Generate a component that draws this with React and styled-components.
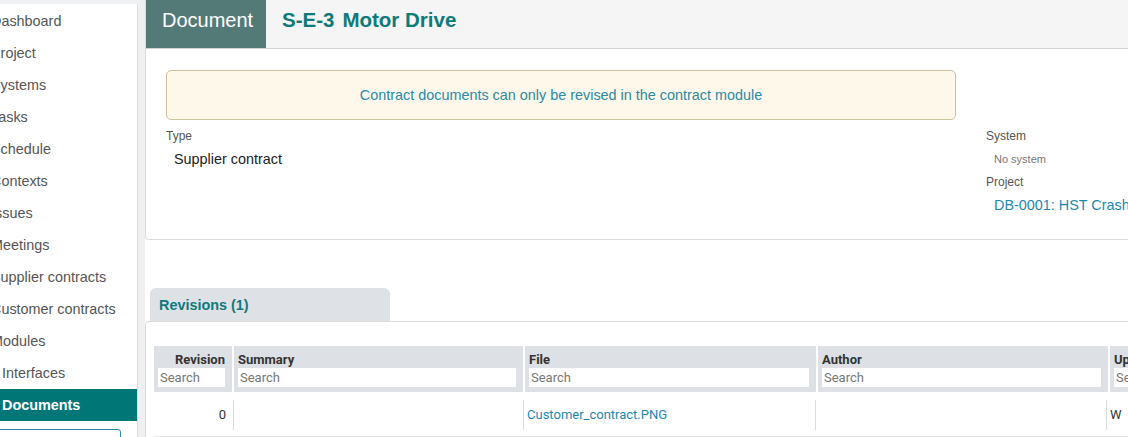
import React from "react";
import styled, { createGlobalStyle } from "styled-components";

const GlobalStyle = createGlobalStyle`
  html, body {
    margin: 0;
    padding: 0;
    overflow: hidden;
    background: #eef0f2;
    font-family: "Liberation Sans", Arial, sans-serif;
  }
`;

const navItems = [
  { label: "Dashboard" },
  { label: "Project" },
  { label: "Systems" },
  { label: "Tasks" },
  { label: "Schedule" },
  { label: "Contexts" },
  { label: "Issues" },
  { label: "Meetings" },
  { label: "Supplier contracts" },
  { label: "Customer contracts" },
  { label: "Modules" },
  { label: "Interfaces", sub: true },
  { label: "Documents", sub: true, active: true },
];

const columns = [
  { key: "revision", title: "Revision", width: 78, right: true },
  { key: "summary", title: "Summary", width: 289 },
  { key: "file", title: "File", width: 291 },
  { key: "author", title: "Author", width: 290 },
  { key: "uploaded", title: "Uploaded", width: 220 },
];

const revisions = [
  { revision: "0", summary: "", file: "Customer_contract.PNG", author: "", uploaded: "W" },
];

export default function App() {
  return (
    <>
      <GlobalStyle />
      <Layout>
        <Sidebar>
          <Nav>
            {navItems.map((item) => (
              <NavItem key={item.label} $sub={item.sub} $active={item.active}>
                {item.label}
              </NavItem>
            ))}
          </Nav>
          <SideSearch />
        </Sidebar>

        <Main>
          <Panel>
            <Header>
              <Kind>Document</Kind>
              <Title>
                <span>S-E-3</span>
                <span>Motor Drive</span>
              </Title>
            </Header>
            <PanelBody>
              <Alert>Contract documents can only be revised in the contract module</Alert>
              <div />
              <Field>
                <Label>Type</Label>
                <Value>Supplier contract</Value>
              </Field>
              <Field>
                <Label>System</Label>
                <Value $muted>No system</Value>
                <Label>Project</Label>
                <Value $link>DB-0001: HST Crash</Value>
              </Field>
            </PanelBody>
          </Panel>

          <Tabs>
            <Tab>Revisions (1)</Tab>
          </Tabs>
          <TabPanel>
            <Table>
              <HeadRow>
                {columns.map((col) => (
                  <HeadCell key={col.key} $w={col.width}>
                    <HeadTitle $right={col.right}>{col.title}</HeadTitle>
                    <SearchInput placeholder="Search" />
                  </HeadCell>
                ))}
              </HeadRow>
              {revisions.map((row) => (
                <BodyRow key={row.revision}>
                  {columns.map((col, i) => (
                    <BodyCell key={col.key} $w={col.width} $first={i === 0}>
                      <CellText $right={col.right} $link={col.key === "file"}>
                        {row[col.key]}
                      </CellText>
                    </BodyCell>
                  ))}
                </BodyRow>
              ))}
            </Table>
          </TabPanel>
        </Main>
      </Layout>
    </>
  );
}

const Layout = styled.div`
  display: flex;
  width: 100vw;
  height: 100vh;
  overflow: hidden;
`;

const Sidebar = styled.aside`
  flex: 0 0 137px;
  margin-top: 4px;
  padding-top: 1px;
  background: #fff;
  border-right: 1px solid #dcdcdc;
  overflow: hidden;
`;

const Nav = styled.nav`
  display: flex;
  flex-direction: column;
`;

const NavItem = styled.a`
  display: block;
  height: 32px;
  line-height: 32px;
  padding-left: ${(p) => (p.$sub ? "2px" : "0")};
  margin-left: ${(p) => (p.$sub ? "0" : "-9px")};
  font-size: 14.4px;
  white-space: nowrap;
  color: ${(p) => (p.$active ? "#fff" : "#555")};
  font-weight: ${(p) => (p.$active ? "bold" : "normal")};
  background: ${(p) => (p.$active ? "#007676" : "transparent")};
`;

const SideSearch = styled.div`
  margin-top: 8px;
  margin-left: -4px;
  width: 123px;
  height: 30px;
  border: 1px solid #2a8aa8;
  border-radius: 3px;
`;

const Main = styled.main`
  flex: 0 0 1100px;
  margin-left: 7px;
  background: #fff;
  display: flex;
  flex-direction: column;
`;

const Panel = styled.section`
  border: 1px solid #dcdcdc;
  border-top: none;
  border-radius: 0 0 4px 4px;
  background: #fff;
`;

const Header = styled.header`
  display: flex;
  align-items: flex-start;
  height: 48px;
  background: #f5f5f5;
  border-bottom: 1px solid #d2d2d2;
`;

const Kind = styled.div`
  width: 120px;
  height: 48px;
  box-sizing: border-box;
  padding: 8px 0 0 16px;
  background: #547a78;
  color: #fff;
  font-size: 20px;
  line-height: 24px;
`;

const Title = styled.h1`
  margin: 0;
  padding: 8px 0 0 16px;
  display: flex;
  gap: 8px;
  font-size: 20.5px;
  line-height: 24px;
  font-weight: bold;
  color: #0e7a7a;
`;

const PanelBody = styled.div`
  display: grid;
  grid-template-columns: 790px 1fr;
  column-gap: 30px;
  row-gap: 8px;
  padding: 21px 20px 19px 20px;
`;

const Alert = styled.div`
  height: 48px;
  line-height: 48px;
  border: 1px solid #c9c39b;
  border-radius: 5px;
  background: #fdf8e9;
  color: #2a8aa8;
  font-size: 14.4px;
  text-align: center;
`;

const Field = styled.div`
  display: flex;
  flex-direction: column;
`;

const Label = styled.div`
  font-size: 12px;
  line-height: 16px;
  color: #555;
`;

const Value = styled.div`
  padding-left: 8px;
  line-height: 30px;
  font-size: ${(p) => (p.$muted ? "11px" : "14.4px")};
  color: ${(p) => (p.$muted ? "#777" : p.$link ? "#1e88b0" : "#222")};
  white-space: nowrap;
`;

const Tabs = styled.div`
  display: flex;
  margin-top: 48px;
  padding-left: 5px;
`;

const Tab = styled.div`
  width: 240px;
  height: 33px;
  box-sizing: border-box;
  padding: 2px 0 0 9px;
  line-height: 31px;
  background: #dee1e5;
  border-radius: 6px 6px 0 0;
  color: #0e7a7a;
  font-size: 14.4px;
  font-weight: bold;
`;

const TabPanel = styled.section`
  border: 1px solid #dcdcdc;
  border-radius: 4px 0 0 0;
  padding: 24px 0 0 8px;
  flex: 1;
`;

const Table = styled.div`
  font-family: Roboto, "Liberation Sans", sans-serif;
  font-size: 13px;
`;

const HeadRow = styled.div`
  display: flex;
  gap: 2px;
`;

const HeadCell = styled.div`
  flex: 0 0 ${(p) => p.$w}px;
  box-sizing: border-box;
  height: 46px;
  padding: 5px 7px 0 4px;
  background: #dde0e4;
`;

const HeadTitle = styled.div`
  font-weight: bold;
  color: #333;
  line-height: 17px;
  text-align: ${(p) => (p.$right ? "right" : "left")};
  white-space: nowrap;
`;

const SearchInput = styled.input`
  display: block;
  width: 100%;
  box-sizing: border-box;
  height: 19px;
  margin-top: 0;
  padding: 0 2px;
  border: none;
  outline: none;
  font-family: inherit;
  font-size: 13px;
  background: #fff;
  &::placeholder {
    color: #777;
  }
`;

const BodyRow = styled.div`
  display: flex;
  gap: 2px;
  height: 44px;
  border-bottom: 2px solid #e4e4e4;
`;

const BodyCell = styled.div`
  flex: 0 0 ${(p) => p.$w}px;
  padding-top: 8px;
  margin-left: ${(p) => (p.$first ? "0" : "-1px")};
`;

const CellText = styled.div`
  height: 30px;
  line-height: 30px;
  box-sizing: border-box;
  padding: 0 6px 0 3px;
  border-left: 1px solid ${(p) => (p.$right ? "transparent" : "#dcdcdc")};
  text-align: ${(p) => (p.$right ? "right" : "left")};
  color: ${(p) => (p.$link ? "#1e88b0" : "#333")};
  white-space: nowrap;
`;
